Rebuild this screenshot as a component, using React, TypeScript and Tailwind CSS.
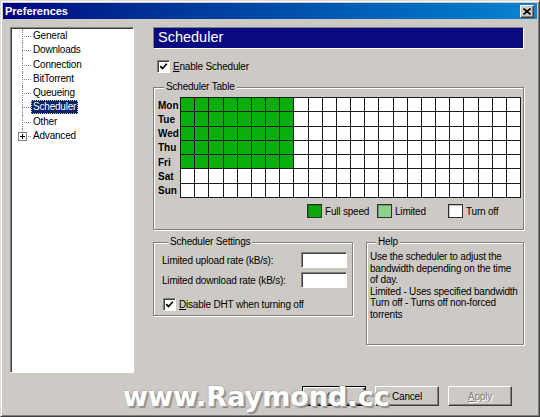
import clsx from 'clsx';

const BG = 'bg-[#cdcac6]';

const treeItems = ['General', 'Downloads', 'Connection', 'BitTorrent', 'Queueing', 'Scheduler', 'Other', 'Advanced'];
const days = ['Mon', 'Tue', 'Wed', 'Thu', 'Fri', 'Sat', 'Sun'];

const sunken =
  'border border-t-[#808080] border-l-[#808080] border-b-white border-r-white shadow-[inset_1px_1px_0_#404040]';
const etched = 'border border-[#808080] shadow-[inset_1px_1px_0_#fff,1px_1px_0_#fff]';

function Checkbox() {
  return (
    <span className={clsx('flex h-[13px] w-[13px] shrink-0 items-center justify-center bg-white', sunken)}>
      <svg width="9" height="9" viewBox="0 0 9 9">
        <path d="M1.2 4.2 L3.5 6.6 L7.8 1.8" stroke="#000" strokeWidth="1.7" fill="none" />
      </svg>
    </span>
  );
}

function TreeRow({ label, selected, last }: { label: string; selected?: boolean; last?: boolean }) {
  return (
    <div className="flex h-[14.25px] items-center">
      <div className="relative h-full w-[20px] shrink-0">
        <span
          className={clsx(
            'absolute left-[11px] top-0 border-l border-dotted border-[#8a8a8a]',
            last ? 'h-[3px]' : 'h-full',
          )}
        />
        <span className="absolute left-[11px] top-1/2 w-[9px] border-t border-dotted border-[#8a8a8a]" />
        {last && (
          <span className="absolute left-[7px] top-[3px] flex h-[9px] w-[9px] items-center justify-center border border-[#808080] bg-white">
            <span className="absolute h-px w-[5px] bg-black" />
            <span className="absolute h-[5px] w-px bg-black" />
          </span>
        )}
      </div>
      <span
        className={clsx(
          'px-px leading-[12px]',
          selected ? 'border border-dotted border-[#c8c890] bg-[#0a246a] text-white' : 'border border-transparent',
        )}
      >
        {label}
      </span>
    </div>
  );
}

function Legend({ children }: { children: string }) {
  return <legend className={clsx('ml-[6px] px-[2px] leading-[12px]', BG)}>{children}</legend>;
}

function Swatch({ color, label, width }: { color: string; label: string; width: string }) {
  return (
    <div className={clsx('flex items-center gap-[3px]', width)}>
      <span className={clsx('h-[14px] w-[15px] border border-[#303030] shadow-[inset_1px_1px_0_rgba(0,0,0,0.25)]', color)} />
      <span>{label}</span>
    </div>
  );
}

function Button({ label, primary, disabled }: { label: React.ReactNode; primary?: boolean; disabled?: boolean }) {
  return (
    <div
      className={clsx(
        'flex h-[20px] w-[64px] items-center justify-center',
        BG,
        primary
          ? 'border border-black shadow-[inset_1px_1px_0_#fff,inset_-1px_-1px_0_#404040,inset_-2px_-2px_0_#808080]'
          : 'border border-t-white border-l-white border-b-[#404040] border-r-[#404040] shadow-[inset_-1px_-1px_0_#808080]',
        disabled && 'text-[#808080] [text-shadow:1px_1px_0_#fff]',
      )}
    >
      {label}
    </div>
  );
}

export default function App() {
  return (
    <div
      className={clsx(
        "relative h-[417px] w-[540px] overflow-hidden font-['Liberation_Sans',Arial,sans-serif] text-[10px] tracking-[-0.2px] text-black",
        BG,
        'border border-t-[#dedbd7] border-l-[#dedbd7] border-b-[#404040] border-r-[#404040] shadow-[inset_1px_1px_0_#fff,inset_-1px_-1px_0_#808080]',
      )}
    >
      {/* title bar */}
      <div className="mx-[2px] mt-[2px] flex h-[16px] items-center justify-between bg-linear-to-r from-[#000080] to-[#1084d0] pl-[2px] pr-[3px]">
        <span className="text-[11px] font-bold tracking-normal text-white">Preferences</span>
        <div
          className={clsx(
            'flex h-[13px] w-[14px] items-center justify-center',
            BG,
            'border border-t-white border-l-white border-b-[#404040] border-r-[#404040] shadow-[inset_-1px_-1px_0_#808080]',
          )}
        >
          <svg width="8" height="7" viewBox="0 0 8 7">
            <path d="M0.5 0.5 L7.5 6.5 M7.5 0.5 L0.5 6.5" stroke="#000" strokeWidth="1.6" />
          </svg>
        </div>
      </div>

      <div className="mt-[8px] flex">
        {/* tree */}
        <div className={clsx('ml-[9px] h-[346px] w-[124px] shrink-0 bg-white pt-px', sunken)}>
          {treeItems.map((item, i) => (
            <TreeRow key={item} label={item} selected={item === 'Scheduler'} last={i === treeItems.length - 1} />
          ))}
        </div>

        {/* right panel */}
        <div className="ml-[19px] flex w-[371px] flex-col">
          <div className="flex h-[22px] items-center border border-t-[#808080] border-l-[#808080] border-b-white border-r-white bg-[#0a0a80] pl-[4px] text-[14.5px] tracking-normal text-white">
            Scheduler
          </div>

          <div className="mt-[11px] flex h-[13px] items-center gap-[3px] pl-[4px]">
            <Checkbox />
            <span>
              <span className="underline">E</span>nable Scheduler
            </span>
          </div>

          <fieldset className={clsx('mt-[8px] pb-[11px] pl-[4px] pt-[4px]', etched)}>
            <Legend>Scheduler Table</Legend>
            <div className="flex">
              <div className="flex w-[22px] flex-col pt-px font-bold tracking-normal">
                {days.map((d) => (
                  <div key={d} className="flex h-[14.28px] items-center">
                    {d}
                  </div>
                ))}
              </div>
              <div className="grid h-[101px] w-[341px] grid-cols-24 grid-rows-7 gap-px bg-[#1a1a1a] p-px">
                {days.map((d, di) =>
                  Array.from({ length: 24 }, (_, h) => (
                    <div key={d + h} className={di < 5 && h < 8 ? 'bg-[#0aae0a]' : 'bg-white'} />
                  )),
                )}
              </div>
            </div>
            <div className="mt-[6px] flex h-[14px] items-center pl-[149px]">
              <Swatch color="bg-[#0aa80a]" label="Full speed" width="w-[70px]" />
              <Swatch color="bg-[#8fd08f]" label="Limited" width="w-[71px]" />
              <Swatch color="bg-white" label="Turn off" width="w-[70px]" />
            </div>
          </fieldset>

          <div className="mt-[6px] flex items-start">
            <fieldset className={clsx('w-[200px] pb-[4px] pl-[8px] pr-[5px] pt-[4px]', etched)}>
              <Legend>Scheduler Settings</Legend>
              <div className="flex h-[16px] items-center justify-between">
                <span>Limited upload rate (kB/s):</span>
                <span className={clsx('h-[16px] w-[46px] bg-white', sunken)} />
              </div>
              <div className="mt-[4px] flex h-[16px] items-center justify-between">
                <span>Limited download rate (kB/s):</span>
                <span className={clsx('h-[16px] w-[46px] bg-white', sunken)} />
              </div>
              <div className="mt-[10px] flex h-[13px] items-center gap-[3px] pl-px">
                <Checkbox />
                <span>
                  <span className="underline">D</span>isable DHT when turning off
                </span>
              </div>
            </fieldset>

            <fieldset className={clsx('ml-[13px] h-[109px] w-[158px] pl-[3px] pt-[3px]', etched)}>
              <Legend>Help</Legend>
              <div className="leading-[11.5px]">
                <div>Use the scheduler to adjust the</div>
                <div>bandwidth depending on the time</div>
                <div>of day.</div>
                <div>Limited - Uses specified bandwidth</div>
                <div>Turn off - Turns off non-forced</div>
                <div>torrents</div>
              </div>
            </fieldset>
          </div>
        </div>
      </div>

      {/* buttons */}
      <div className="mt-[13px] flex justify-end gap-[9px] pr-[27px]">
        <Button label="OK" primary />
        <Button label="Cancel" />
        <Button
          label={
            <span>
              <span className="underline">A</span>pply
            </span>
          }
          disabled
        />
      </div>

      {/* watermark */}
      <div className="pointer-events-none absolute left-[122px] top-[382px] font-['DejaVu_Sans',sans-serif] text-[27px] font-bold leading-[27px] tracking-normal text-white [text-shadow:1px_1px_0_#9a9a9a,2px_2px_1px_#8a8a8a,-1px_-1px_0_#b8b8b8]">
        www.Raymond.cc
      </div>
    </div>
  );
}
